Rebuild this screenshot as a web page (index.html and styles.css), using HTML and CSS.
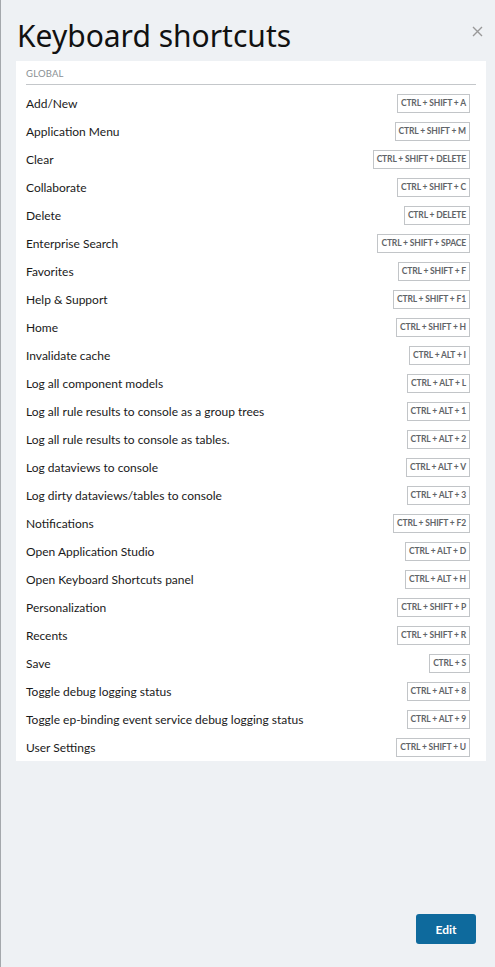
FILE: index.html
```html
<!DOCTYPE html>
<html>
<head>
<meta charset="utf-8">
<link rel="stylesheet" href="styles.css">
</head>
<body>
<div class="edge"></div>
<div class="modal">
  <header class="head">
    <h1 class="title">Keyboard shortcuts</h1>
    <button class="close" aria-label="Close">
      <svg width="11" height="11" viewBox="0 0 11 11"><path d="M1 1L10 10M10 1L1 10" stroke="#999" stroke-width="1.4" fill="none"/></svg>
    </button>
  </header>
  <section class="panel">
    <div class="group">GLOBAL</div>
    <ul class="list">
      <li class="row"><span>Add/New</span><kbd>CTRL + SHIFT + A</kbd></li>
      <li class="row"><span>Application Menu</span><kbd>CTRL + SHIFT + M</kbd></li>
      <li class="row"><span>Clear</span><kbd>CTRL + SHIFT + DELETE</kbd></li>
      <li class="row"><span>Collaborate</span><kbd>CTRL + SHIFT + C</kbd></li>
      <li class="row"><span>Delete</span><kbd>CTRL + DELETE</kbd></li>
      <li class="row"><span>Enterprise Search</span><kbd>CTRL + SHIFT + SPACE</kbd></li>
      <li class="row"><span>Favorites</span><kbd>CTRL + SHIFT + F</kbd></li>
      <li class="row"><span>Help &amp; Support</span><kbd>CTRL + SHIFT + F1</kbd></li>
      <li class="row"><span>Home</span><kbd>CTRL + SHIFT + H</kbd></li>
      <li class="row"><span>Invalidate cache</span><kbd>CTRL + ALT + I</kbd></li>
      <li class="row"><span>Log all component models</span><kbd>CTRL + ALT + L</kbd></li>
      <li class="row"><span>Log all rule results to console as a group trees</span><kbd>CTRL + ALT + 1</kbd></li>
      <li class="row"><span>Log all rule results to console as tables.</span><kbd>CTRL + ALT + 2</kbd></li>
      <li class="row"><span>Log dataviews to console</span><kbd>CTRL + ALT + V</kbd></li>
      <li class="row"><span>Log dirty dataviews/tables to console</span><kbd>CTRL + ALT + 3</kbd></li>
      <li class="row"><span>Notifications</span><kbd>CTRL + SHIFT + F2</kbd></li>
      <li class="row"><span>Open Application Studio</span><kbd>CTRL + ALT + D</kbd></li>
      <li class="row"><span>Open Keyboard Shortcuts panel</span><kbd>CTRL + ALT + H</kbd></li>
      <li class="row"><span>Personalization</span><kbd>CTRL + SHIFT + P</kbd></li>
      <li class="row"><span>Recents</span><kbd>CTRL + SHIFT + R</kbd></li>
      <li class="row"><span>Save</span><kbd>CTRL + S</kbd></li>
      <li class="row"><span>Toggle debug logging status</span><kbd>CTRL + ALT + 8</kbd></li>
      <li class="row"><span>Toggle ep-binding event service debug logging status</span><kbd>CTRL + ALT + 9</kbd></li>
      <li class="row"><span>User Settings</span><kbd>CTRL + SHIFT + U</kbd></li>
    </ul>
  </section>
  <footer class="foot">
    <button class="edit">Edit</button>
  </footer>
</div>
</body>
</html>
```

FILE: styles.css
```css
html, body {
  margin: 0;
  padding: 0;
  height: 100%;
}
body {
  background: #eef1f4;
  font-family: Lato, "Noto Sans", sans-serif;
  color: #1a1a1a;
  position: relative;
}
.edge {
  position: absolute;
  left: 0;
  top: 0;
  bottom: 0;
  width: 1px;
  background: #a4a8ac;
}
.modal {
  height: 967px;
  display: flex;
  flex-direction: column;
  padding: 0 9px 0 16px;
  box-sizing: border-box;
}
.head {
  display: flex;
  justify-content: space-between;
  align-items: flex-start;
  height: 61px;
}
.title {
  margin: 14px 0 0 1px;
  font-family: "Noto Sans", sans-serif;
  font-weight: 400;
  font-size: 30px;
  line-height: 44px;
  color: #111;
}
.close {
  margin: 26px 3px 0 0;
  padding: 0;
  border: 0;
  background: none;
  width: 11px;
  height: 11px;
  display: flex;
}
.panel {
  background: #fff;
  padding: 6px 10px 0 10px;
}
.group {
  font-size: 9.5px;
  color: #8a8f94;
  line-height: 14px;
  padding-bottom: 3px;
  border-bottom: 1px solid #c4c7ca;
  letter-spacing: 0.2px;
}
.list {
  list-style: none;
  margin: 4px 0 0 0;
  padding: 0 6px 0 0;
}
.row {
  display: flex;
  justify-content: space-between;
  align-items: center;
  height: 28px;
  font-size: 12px;
}
kbd {
  font-family: Lato, sans-serif;
  font-weight: 700;
  font-size: 8.5px;
  color: #5f6468;
  border: 1px solid #c2c5c8;
  padding: 0 3px;
  height: 17px;
  line-height: 17px;
  letter-spacing: -0.15px;
}
.foot {
  margin-top: auto;
  display: flex;
  justify-content: flex-end;
  padding: 0 10px 23px 0;
}
.edit {
  width: 60px;
  height: 30px;
  background: #0e6a9d;
  color: #fff;
  border: 0;
  border-radius: 3px;
  font-family: Lato, sans-serif;
  font-weight: 700;
  font-size: 12px;
}
```
